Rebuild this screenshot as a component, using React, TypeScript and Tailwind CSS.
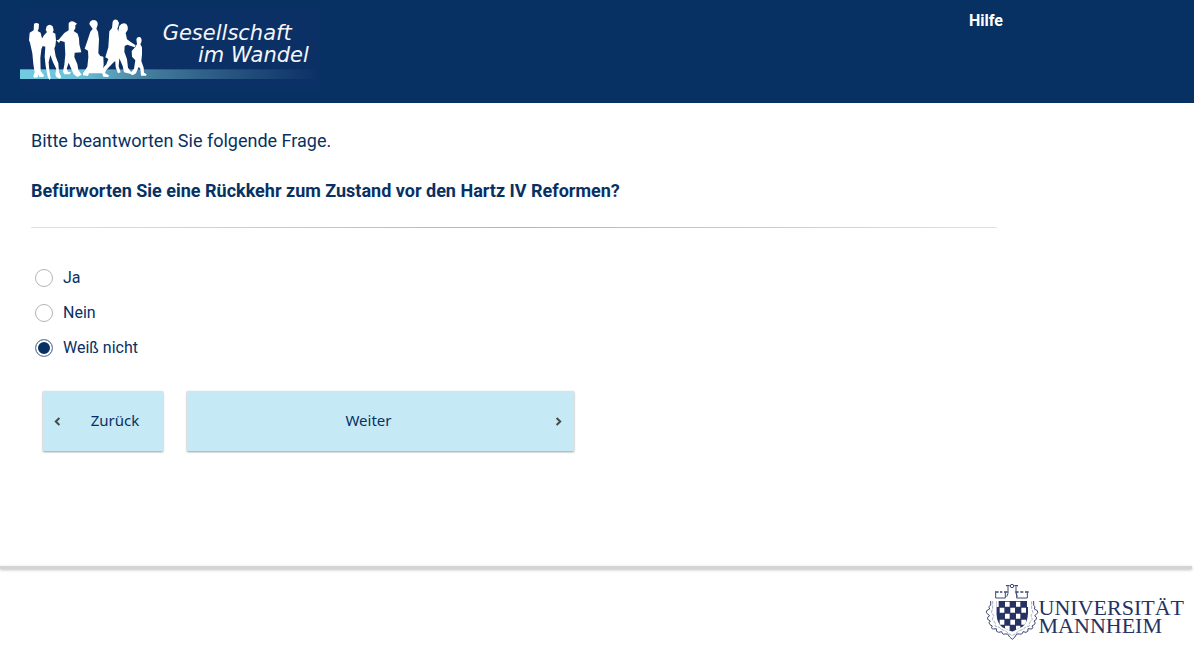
import { useState } from "react";

function WandelLogo() {
  return (
    <svg viewBox="27 27 900 243" className="h-[81px] w-[300px]" role="img" aria-label="Gesellschaft im Wandel">
      <defs>
        <linearGradient id="ground" x1="0" x2="1" y1="0" y2="0">
          <stop offset="0" stopColor="#72cbe3" />
          <stop offset="0.2" stopColor="#6bbfd9" />
          <stop offset="0.42" stopColor="#467f9f" />
          <stop offset="0.7" stopColor="#275580" />
          <stop offset="1" stopColor="#0b3066" />
        </linearGradient>
      </defs>
      <rect x="27" y="27" width="900" height="243" fill="#0b3066" />
      <rect x="30" y="208" width="897" height="29" fill="url(#ground)" />
      <g fill="#fff">
        <path d="M72 71Q80 66 87 72L86 86 83 93 92 98 95 112 101 122 98 138 94 148 91 174 92 214 102 226 100 231 88 231 84 222 84 232 72 233 70 229 74 217 70 192 67 160 60 128 57 121 59 98 71 91Z" />
        <path d="M110 79Q119 69 128 79L131 91 128 97 136 101 138 121 136 138 133 145 137 169 145 190 147 216 154 232 149 236 138 230 136 222 139 207 129 187 121 165 116 187 118 211 122 236 118 239 113 230 107 199 104 170 106 140 97 138 93 121 102 106 111 96 107 90Z" />
        <path d="M176 70Q181 61 192 65L201 71 196 76 196 85 191 93 203 101 207 115 208 133 214 157 194 158 193 171 202 193 205 210 215 224 202 231 191 223 184 207 176 188 170 206 174 216 183 216 179 223 163 223 159 215 163 194 166 163 164 126 151 122 147 129 139 121 146 119 163 99 176 91Z" />
        <g transform="translate(210 30)">
          <path d="M28 42Q30 30 42 30 54 32 53 44L49 56 54 65 57 88 55 130 61 138 70 140 71 164 67 190 27 190 24 198 9 196 9 190 22 170 25 142 24 122 14 116 22 93 31 65 38 57Z" />
          <path d="M98 35Q102 26 112 30L117 38 115 49 112 56 116 66 115 105 111 149 101 157 78 181 75 189 88 197 84 201 70 200 65 187 66 178 79 163 85 147 76 142 85 112 88 64 96 54Z" />
          <path d="M118 48Q126 36 138 41 145 47 143 60L137 69 141 88 152 96 167 106 164 112 142 104 134 108 133 125 141 148 144 173 155 188 149 191 132 187 128 168 118 145 116 169 122 187 114 190 107 172 105 145 111 98 113 72Z" />
          <path d="M169 88Q171 79 180 81 187 86 184 97L181 103 186 112 186 133 184 153 191 173 192 188 200 193 198 197 183 197 181 176 176 171 168 190 158 196 150 191 153 187 162 176 166 151 156 140 155 123 166 111 171 102Z" />
        </g>
      </g>
      <g fill="#f4f6fa" fontStyle="italic" fontSize="63" className="font-['DejaVu_Sans',sans-serif]">
        <text x="458" y="119">Gesellschaft</text>
        <text x="564" y="187">im Wandel</text>
      </g>
    </svg>
  );
}

function Crest() {
  return (
    <svg viewBox="15 15 162 174" className="h-[58px] w-[54px]" aria-hidden="true">
      <defs>
        <clipPath id="shield">
          <path d="M49 69H144V107Q142 136 127 146L97 161 67 148Q52 138 49 108Z" />
        </clipPath>
      </defs>
      <g clipPath="url(#shield)">
        <rect x="47" y="66" width="100" height="100" fill="#253262" />
        <path
          d="M47 69h9v18h-9zM59 89h14v15H59zM91 89h14v15H91zM124 89h14v15h-14zM75 71h14v15H75zM108 71h13v15h-13zM141 69h4v18h-4zM75 107h14v15H75zM108 107h13v15h-13zM59 125h14v15H59zM91 125h14v15H91zM124 125h14v15h-14zM75 143h14v14H75zM108 143h13v14h-13z"
          fill="#fff"
        />
      </g>
      <g fill="none" stroke="#3c4874" strokeWidth="3">
        <path d="M47 43v17h29V43M110 43v17h32V43" />
        <path d="M45 42h11M60 42h7M72 42h11M106 42h10M121 42h9M135 42h11" strokeWidth="4" />
        <path d="M84 25v21l-4 10M108 25v21l4 10" />
        <path d="M78 23h11M103 23h11" strokeWidth="4" />
        <circle cx="96" cy="24" r="5" />
        <g strokeLinejoin="round">
          <path
            d="M32 69V82Q24 84 29 93L20 98Q16 105 24 109L29 113Q20 117 23 124L31 129Q23 135 30 140L37 144Q31 152 40 153L49 152Q47 162 56 163L65 161Q67 171 75 168L83 168Q88 178 97 184 106 178 110 168L119 168Q127 171 129 161L138 163Q146 162 144 152L153 153Q162 152 156 144L163 140Q169 135 162 129L169 124Q172 117 164 113L169 109Q176 105 172 98L163 93Q168 84 161 82V69"
            strokeWidth="3"
          />
          <path
            d="M38 69V92L34 103 41 113 37 124 46 135 45 144 58 148 65 155 76 158 85 166 97 173 108 166 117 158 128 155 136 148 148 144 148 135 157 124 153 113 159 103 155 92V69"
            stroke="#7882a1"
            strokeWidth="2"
            strokeDasharray="10 3"
          />
        </g>
      </g>
    </svg>
  );
}

function Chevron({ back = false }: { back?: boolean }) {
  return (
    <svg viewBox="0 0 7 9" className="h-[9px] w-[7px] shrink-0" fill="none" stroke="#4a4a4a" strokeWidth="2" aria-hidden="true">
      <path d={back ? "M5.4 1 1.8 4.5 5.4 8" : "M1.6 1 5.2 4.5 1.6 8"} />
    </svg>
  );
}

const options = ["Ja", "Nein", "Weiß nicht"];
const buttonClass =
  "flex h-15 items-center bg-[#c5e9f5] pr-3 pl-[11px] font-['Noto_Sans',sans-serif] text-[15px] shadow-[0_1px_2px_rgba(0,0,0,0.4)]";

export default function App() {
  const [answer, setAnswer] = useState("Weiß nicht");
  return (
    <div className="flex min-h-screen flex-col overflow-x-hidden bg-white font-[Roboto,sans-serif] text-[#083163]">
      <header className="bg-[#083163]">
        <div className="flex max-w-[1024px] items-start justify-between pt-[9px] pr-[21px] pb-[13px] pl-[19px]">
          <WandelLogo />
          <a href="#hilfe" className="text-base leading-6 font-bold text-white">Hilfe</a>
        </div>
      </header>

      <main className="max-w-[1024px] grow pt-6 pr-[27px] pb-10 pl-[31px]">
        <form onSubmit={(e) => e.preventDefault()}>
          <p className="text-lg leading-7">Bitte beantworten Sie folgende Frage.</p>
          <h1 id="question" className="mt-[22px] text-lg leading-7 font-bold">
            Befürworten Sie eine Rückkehr zum Zustand vor den Hartz IV Reformen?
          </h1>
          <div className="mt-[22px] h-px bg-linear-to-r from-[#e2e2e2] via-[#b4b4b4] to-[#e2e2e2]" />

          <div role="radiogroup" aria-labelledby="question" className="mt-8 flex flex-col items-start pl-1">
            {options.map((option) => (
              <label key={option} className="flex h-[35px] items-center gap-2.5 text-base">
                <input
                  type="radio"
                  name="answer"
                  checked={answer === option}
                  onChange={() => setAnswer(option)}
                  className="size-[18px] appearance-none rounded-full border border-[#b5b5b5] bg-white checked:border-[#7d8aa3] checked:bg-[#083163] checked:shadow-[inset_0_0_0_2px_white]"
                />
                {option}
              </label>
            ))}
          </div>

          <div className="mt-[26px] flex gap-6 pl-3">
            <button type="button" className={`${buttonClass} w-[120px]`}>
              <Chevron back />
              <span className="grow pb-0.5 pl-[18px]">Zurück</span>
            </button>
            <button type="submit" className={`${buttonClass} w-[387px]`}>
              <span className="grow pr-4 pb-0.5">Weiter</span>
              <Chevron />
            </button>
          </div>
        </form>
      </main>

      <footer className="pb-[7px]">
        <div className="mr-0.5 h-[3px] bg-[#d4d4d4] shadow-[0_1px_3px_rgba(0,0,0,0.25)]" />
        <div className="mt-3.5 flex items-start justify-end pr-2.5 text-[#253262]">
          <Crest />
          <p className="pt-4 font-['Liberation_Serif',serif] text-[22px] leading-[18px]">
            UNIVERSITÄT
            <br />
            MANNHEIM
          </p>
        </div>
      </footer>
    </div>
  );
}
